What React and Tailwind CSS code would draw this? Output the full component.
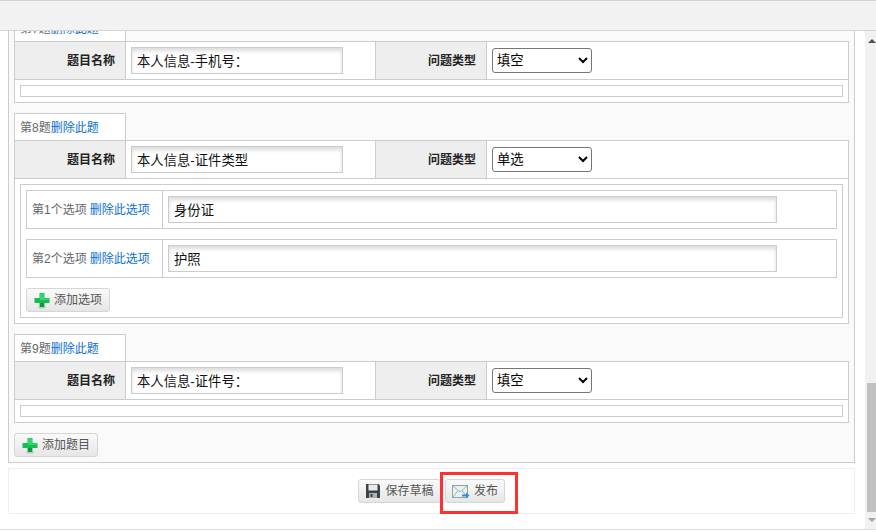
import React from 'react';

const PlusIcon = () => (
  <svg width="16" height="17" viewBox="0 0 16 17" className="shrink-0">
    <ellipse cx="8" cy="15.5" rx="4" ry="1" fill="#c4c4c4" />
    <path d="M5.500 1h5v5h5v5h-5v4h-5v-4h-5V6h5z" fill="#17bd52" />
    <path d="M6 1.500h4v5h5v1.500H6z" fill="#35d56f" />
    <path d="M6 11h4v4H6z" fill="#0f9a40" />
  </svg>
);

const SaveIcon = () => (
  <svg width="16" height="16" viewBox="0 0 16 16" className="shrink-0">
    <path d="M1 1h12.500L15 2.500V15H1z" fill="#3c4248" />
    <rect x="3.500" y="1.500" width="9" height="6" fill="#e8eaec" />
    <rect x="4" y="10" width="8" height="5" fill="#aab0b6" />
    <rect x="5.500" y="11" width="2" height="3" fill="#3c4248" />
  </svg>
);

const MailIcon = () => (
  <svg width="18" height="17" viewBox="0 0 18 17" className="shrink-0">
    <rect x="0.500" y="2.500" width="15" height="12" fill="#eaf2f1" stroke="#8fa6a6" />
    <path d="M1 3l7 6 7-6M1 14l5-6.500M15 14l-5-6.500" fill="none" stroke="#9db3b3" />
    <path d="M10 11.500h4V9.500l3.500 3-3.500 3v-2h-4z" fill="#2a8fe0" />
  </svg>
);

const Button = ({ icon, label, className = '' }) => (
  <button className={`flex h-6 items-center gap-1 rounded-[3px] border border-[#d5d5d5] bg-gradient-to-b from-[#fafafa] to-[#e6e6e6] text-xs text-[#555] ${className}`}>
    {icon}
    <span>{label}</span>
  </button>
);

const TextInput = ({ value, className = '' }) => (
  <input
    readOnly
    value={value}
    className={`h-[27px] border border-[#ccc] bg-white px-[5px] text-[13.33px] text-[#111] shadow-[inset_0_3px_4px_rgba(0,0,0,0.14)] outline-none ${className}`}
  />
);

const HeaderRow = ({ title, type }) => (
  <div className="flex h-[38px] border-b border-[#ccc]">
    <div className="flex w-[111px] items-center justify-end border-r border-[#ccc] bg-[#eee] pr-[10px] text-xs font-bold text-[#222]">
      题目名称
    </div>
    <div className="flex w-[250px] items-center border-r border-[#ccc] pl-[5px]">
      <TextInput value={title} className="w-[212px]" />
    </div>
    <div className="flex w-[111px] items-center justify-end border-r border-[#ccc] bg-[#eee] pr-[10px] text-xs font-bold text-[#222]">
      问题类型
    </div>
    <div className="flex flex-1 items-center pl-[5px]">
      <select
        defaultValue={type}
        className="h-[25px] w-[100px] rounded-[3px] border border-[#767676] bg-white text-[13.33px] text-black"
      >
        <option>填空</option>
        <option>单选</option>
      </select>
    </div>
  </div>
);

const Question = ({ no, title, type, children }) => (
  <div>
    <div className="-mb-px flex h-[28px] w-[112px] items-center border border-[#ccc] bg-white pl-[5px] pt-[2px] text-xs text-[#666]">
      第{no}题<a className="text-[#0b6fd0]">删除此题</a>
    </div>
    <div className="border border-[#ccc] bg-white">
      <HeaderRow title={title} type={type} />
      <div className="p-[5px]">
        {children || <div className="h-[12px] border border-[#ccc]" />}
      </div>
    </div>
  </div>
);

const OptionRow = ({ no, value }) => (
  <div className="flex h-[39px] border border-[#ccc]">
    <div className="flex w-[136px] items-center border-r border-[#ccc] pl-[5px] text-xs text-[#666]">
      <span>第{no}个选项</span>
      <a className="ml-[3px] text-[#0b6fd0]">删除此选项</a>
    </div>
    <div className="flex items-center pl-[5px]">
      <TextInput value={value} className="w-[609px]" />
    </div>
  </div>
);

const App = () => {
  return (
    <div className="flex h-[532px] w-[876px] flex-col overflow-hidden bg-white font-['Liberation_Sans','Noto_Sans_CJK_SC',sans-serif]">
      {/* top bar */}
      <div className="h-[31px] shrink-0 border-y border-y-[#d4d4d4] bg-[#f2f2f2]" />

      {/* scrolled body */}
      <div className="flex h-[499px] shrink-0 border-b border-[#ddd]">
        <div className="w-[865px] overflow-hidden">
          <div className="-mt-[18px] ml-2 w-[847px] border border-[#ccc] bg-[#fafafa] px-[5px] pb-[5px]">
            <div className="flex flex-col gap-[10px]">
              <Question no={7} title="本人信息-手机号：" type="填空" />
              <Question no={8} title="本人信息-证件类型" type="单选">
                <div className="flex flex-col border border-[#ccc] p-[5px]">
                  <OptionRow no={1} value="身份证" />
                  <div className="h-[10px]" />
                  <OptionRow no={2} value="护照" />
                  <Button icon={<PlusIcon />} label="添加选项" className="mt-[10px] w-[84px] justify-center" />
                </div>
              </Question>
              <Question no={9} title="本人信息-证件号：" type="填空" />
              <Button icon={<PlusIcon />} label="添加题目" className="w-[84px] justify-center" />
            </div>
          </div>
          <div className="ml-2 mt-[5px] flex h-[46px] w-[847px] items-center justify-center gap-1 border border-[#eee] bg-white">
            <Button icon={<SaveIcon />} label="保存草稿" className="w-[83px] justify-center" />
            <Button icon={<MailIcon />} label="发布" className="w-[60px] justify-center" />
          </div>
        </div>

        {/* scrollbar */}
        <div className="flex w-[11px] shrink-0 flex-col items-end bg-[#f1f1f1]">
          <div className="flex h-[352px] w-[9px] justify-center pt-[8px]">
            <div className="h-0 w-0 border-x-[4px] border-b-[4px] border-x-transparent border-b-[#505050]" />
          </div>
          <div className="h-[129px] w-[9px] bg-[#c1c1c1]" />
          <div className="flex w-[9px] justify-center pt-[6px]">
            <div className="h-0 w-0 border-x-[4px] border-t-[4px] border-x-transparent border-t-[#a3a3a3]" />
          </div>
        </div>
      </div>

      {/* red highlight around the publish button */}
      <div className="pointer-events-none absolute left-[440px] top-[472px] h-[42px] w-[78px] border-[3px] border-[#ff3030]" />
    </div>
  );
};

export default App;
